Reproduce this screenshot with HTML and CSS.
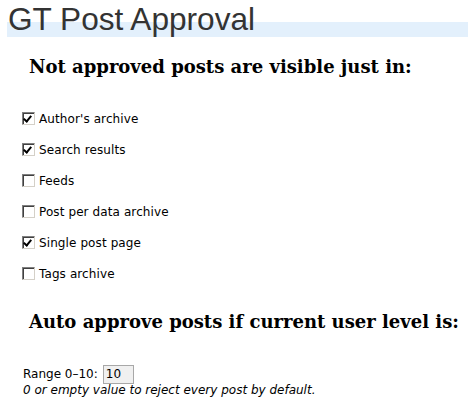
FILE: index.html
```html
<!DOCTYPE html>
<html>
<head>
<meta charset="utf-8">
<link rel="stylesheet" href="styles.css">
</head>
<body>
<div class="page">
  <h1 class="title">GT Post Approval</h1>
  <h2 class="heading first">Not approved posts are visible just in:</h2>
  <ul class="options">
    <li class="option"><span class="box checked"></span><span class="label">Author's archive</span></li>
    <li class="option"><span class="box checked"></span><span class="label">Search results</span></li>
    <li class="option"><span class="box"></span><span class="label">Feeds</span></li>
    <li class="option"><span class="box"></span><span class="label">Post per data archive</span></li>
    <li class="option"><span class="box checked"></span><span class="label">Single post page</span></li>
    <li class="option"><span class="box"></span><span class="label">Tags archive</span></li>
  </ul>
  <h2 class="heading second">Auto approve posts if current user level is:</h2>
  <div class="range">
    <div class="range-row"><span class="label">Range 0–10:</span><span class="input">10</span></div>
    <div class="hint">0 or empty value to reject every post by default.</div>
  </div>
</div>
</body>
</html>
```
FILE: styles.css
```css
html, body {
  margin: 0;
  padding: 0;
  background: #fff;
}
.page {
  width: 468px;
  height: 412px;
  overflow: hidden;
}
.title {
  margin: 0 0 0 7px;
  padding-left: 1px;
  height: 40px;
  font-family: "Liberation Sans", Arial, sans-serif;
  font-weight: normal;
  font-size: 31.6px;
  line-height: 38px;
  color: #333;
  background: linear-gradient(to bottom, transparent 22px, #e3f0fc 22px, #e3f0fc 37px, transparent 37px);
}
.heading {
  margin: 0;
  padding-left: 29px;
  font-family: "DejaVu Serif", Georgia, serif;
  font-weight: bold;
  font-size: 18px;
  color: #000;
  white-space: nowrap;
}
.heading.first {
  margin-top: 15px;
  line-height: 24px;
}
.heading.second {
  margin-top: 21px;
  line-height: 24px;
}
.options {
  list-style: none;
  margin: 24px 0 0 0;
  padding: 0 0 0 22px;
}
.option {
  display: flex;
  align-items: center;
  gap: 4px;
  height: 31px;
  font-family: "DejaVu Sans", Verdana, sans-serif;
  font-size: 12px;
  letter-spacing: 0.1px;
  color: #000;
}
.box {
  position: relative;
  box-sizing: border-box;
  width: 13px;
  height: 13px;
  background: #fff;
  border-top: 1px solid #808080;
  border-left: 1px solid #808080;
  border-right: 1px solid #d4d0c8;
  border-bottom: 1px solid #d4d0c8;
  box-shadow: inset 1px 1px 0 #404040;
}
.box.checked::after {
  content: "";
  position: absolute;
  left: 2px;
  top: 1px;
  width: 3px;
  height: 6px;
  border-right: 2px solid #000;
  border-bottom: 2px solid #000;
  transform: rotate(40deg);
  transform-origin: 50% 50%;
}
.range {
  margin-top: 30px;
  padding-left: 23px;
  font-family: "DejaVu Sans", Verdana, sans-serif;
  font-size: 12px;
  color: #000;
}
.range-row {
  display: flex;
  align-items: center;
  gap: 5px;
  height: 20px;
}
.input {
  box-sizing: border-box;
  width: 31px;
  height: 19px;
  padding: 1px 0 0 2px;
  line-height: 15px;
  border: 1px solid #a8a8a8;
  background: #f0f0f0;
}
.hint {
  font-style: italic;
  line-height: 14px;
  margin-top: -1px;
}
```
